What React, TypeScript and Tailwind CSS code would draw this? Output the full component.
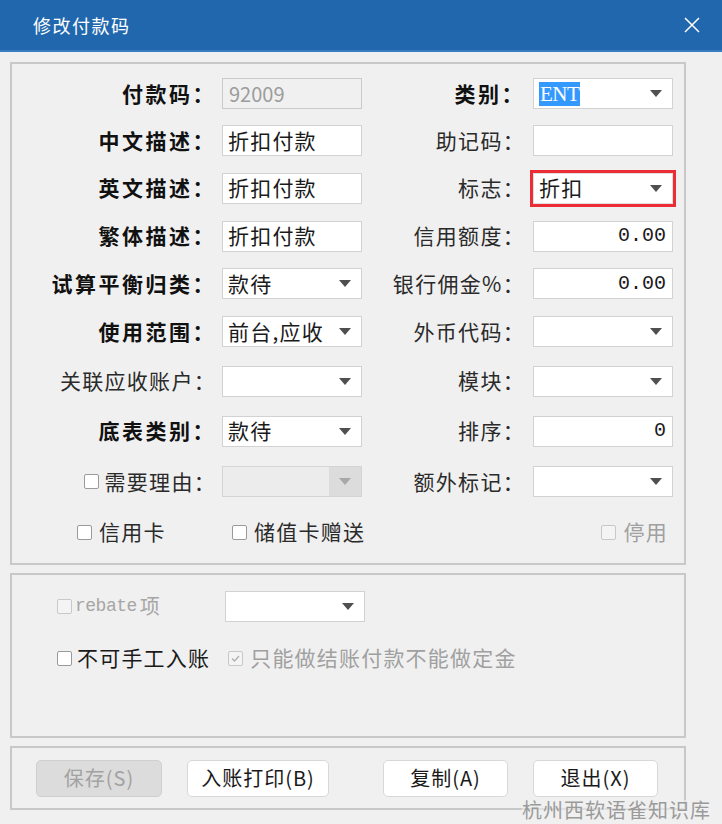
import React from "react";

const FONT = { fontFamily: '"Noto Sans CJK SC", "Noto Sans", sans-serif' };

function Arrow({ light }: { light?: boolean }) {
  return (
    <svg width="12" height="7" viewBox="0 0 12 7" className="shrink-0">
      <polygon points="0,0 12,0 6,7" fill={light ? "#a8a8a8" : "#4f4f4f"} />
    </svg>
  );
}

function Box({ children, w = "w-[140px]" }: { children?: React.ReactNode; w?: string }) {
  return (
    <div className={`${w} h-[31px] bg-white border border-[#d2d2d2] flex items-center px-[5px] text-[21px] tracking-[1.2px] text-[#1a1a1a] overflow-hidden whitespace-nowrap`}>
      {children}
    </div>
  );
}

function Select({ value, w = "w-[140px]" }: { value?: React.ReactNode; w?: string }) {
  return (
    <div className={`${w} h-[31px] bg-white border border-[#d2d2d2] flex items-center pl-[5px] pr-[10px] text-[21px] tracking-[1.2px] text-[#1a1a1a] whitespace-nowrap`}>
      <div className="flex-1 overflow-hidden">{value}</div>
      <Arrow />
    </div>
  );
}

function Num({ v }: { v: string }) {
  return (
    <div className="w-[140px] h-[31px] bg-white border border-[#d2d2d2] flex items-center justify-end pr-[6px] text-[20px] text-[#1a1a1a]" style={{ fontFamily: '"Liberation Mono", monospace' }}>
      {v}
    </div>
  );
}

function Check({ disabled, checked }: { disabled?: boolean; checked?: boolean }) {
  return (
    <span className={`inline-flex items-center justify-center w-[15px] h-[15px] rounded-[2px] border ${disabled ? "border-[#c8c8c8] bg-[#f4f4f4]" : "border-[#9a9a9a] bg-white"} shrink-0`}>
      {checked ? (
        <svg width="11" height="11" viewBox="0 0 11 11">
          <polyline points="2,5.5 4.5,8 9,3" fill="none" stroke="#b0b0b0" strokeWidth="1.3" />
        </svg>
      ) : null}
    </span>
  );
}

function Label({ children, bold, w }: { children: React.ReactNode; bold?: boolean; w: string }) {
  return (
    <div className={`${w} text-right text-[21px] whitespace-nowrap ${bold ? "font-bold tracking-[2.5px] text-[#111]" : "tracking-[1.3px] text-[#2a2a2a]"}`}>
      {children}
    </div>
  );
}

function Row({ h, l, lb, left, r, rb, right }: any) {
  return (
    <div className={`flex items-center ${h}`}>
      <Label w="w-[204px]" bold={lb}>{l}</Label>
      <div className="ml-[6px]">{left}</div>
      <Label w="w-[163px]" bold={rb}>{r}</Label>
      <div className="ml-[8px]">{right}</div>
    </div>
  );
}

export default function App() {
  return (
    <div className="relative w-[722px] h-[824px] bg-[#f0f0f0] overflow-hidden" style={FONT}>
      {/* 标题栏 */}
      <div className="h-[52px] bg-[#2167ad] border-b-2 border-[#3a7cc0] flex items-center justify-between pl-[33px] pr-[22px] text-white">
        <div className="text-[18px] tracking-[1.5px]">修改付款码</div>
        <svg width="16" height="16" viewBox="0 0 16 16">
          <path d="M1 1 L15 15 M15 1 L1 15" stroke="#fff" strokeWidth="1.5" />
        </svg>
      </div>

      {/* 主信息 */}
      <div className="ml-[10px] mt-[10px] w-[676px] h-[503px] border-2 border-[#c8c8c8] pt-[6px] flex flex-col">
        <Row
          h="h-[47px]"
          l="付款码："
          lb
          left={
            <div className="w-[140px] h-[31px] bg-[#f0f0f0] border border-[#cacaca] flex items-center px-[6px] text-[20px] text-[#9c9c9c]">92009</div>
          }
          r="类别："
          rb
          right={
            <Select
              value={
                <span className="bg-[#3399ff] text-white px-[1px] tracking-[-0.5px]" style={{ fontFamily: '"Liberation Serif", serif' }}>
                  ENT
                </span>
              }
            />
          }
        />
        <Row h="h-[47px]" l="中文描述：" lb left={<Box>折扣付款</Box>} r="助记码：" right={<Box />} />
        <Row
          h="h-[48px]"
          l="英文描述："
          lb
          left={<Box>折扣付款</Box>}
          r="标志："
          right={
            <div className="-m-[3px] border-[3px] border-[#ec2d35]">
              <div className="w-[140px] h-[31px] bg-white border border-[#e0e0e0] flex items-center pl-[5px] pr-[10px] text-[21px] tracking-[1.2px] text-[#1a1a1a]">
                <div className="flex-1">折扣</div>
                <Arrow />
              </div>
            </div>
          }
        />
        <Row h="h-[48px]" l="繁体描述：" lb left={<Box>折扣付款</Box>} r="信用额度：" right={<Num v="0.00" />} />
        <Row h="h-[47px]" l="试算平衡归类：" lb left={<Select value="款待" />} r="银行佣金%：" right={<Num v="0.00" />} />
        <Row h="h-[49px]" l="使用范围：" lb left={<Select value="前台,应收" />} r="外币代码：" right={<Select />} />
        <Row h="h-[50px]" l="关联应收账户：" left={<Select />} r="模块：" right={<Select />} />
        <Row h="h-[50px]" l="底表类别：" lb left={<Select value="款待" />} r="排序：" right={<Num v="0" />} />
        <Row
          h="h-[51px]"
          l={
            <span className="inline-flex items-center gap-[6px]">
              <Check />
              需要理由：
            </span>
          }
          left={
            <div className="w-[140px] h-[31px] bg-[#ececec] border border-[#d4d4d4] flex">
              <div className="flex-1" />
              <div className="w-[32px] bg-[#dcdcdc] flex items-center justify-center">
                <Arrow light />
              </div>
            </div>
          }
          r="额外标记："
          right={<Select />}
        />
        <div className="flex items-center h-[50px] text-[21px] tracking-[1.3px] text-[#2a2a2a]">
          <span className="ml-[65px] inline-flex items-center gap-[7px]">
            <Check />
            信用卡
          </span>
          <span className="ml-[66px] inline-flex items-center gap-[7px]">
            <Check />
            储值卡赠送
          </span>
          <span className="ml-auto mr-[16px] inline-flex items-center gap-[7px] text-[#a0a0a0]">
            <Check disabled />
            停用
          </span>
        </div>
      </div>

      {/* 其它选项 */}
      <div className="ml-[10px] mt-[8px] w-[676px] h-[165px] border-2 border-[#c8c8c8] pl-[45px] pt-[13px]">
        <div className="flex items-center h-[36px]">
          <span className="inline-flex items-center gap-[3px] w-[168px] text-[20px] text-[#a6a6a6]">
            <Check disabled />
            <span style={{ fontFamily: '"Liberation Mono", "Noto Sans CJK SC", monospace' }} className="text-[18px] tracking-[-0.5px]">rebate</span>
            <span>项</span>
          </span>
          <Select />
        </div>
        <div className="flex items-center h-[34px] mt-[17px] text-[21px] tracking-[1.2px]">
          <span className="inline-flex items-center gap-[5px] text-[#1a1a1a]">
            <Check />
            不可手工入账
          </span>
          <span className="ml-[18px] inline-flex items-center gap-[7px] text-[#a0a0a0]">
            <Check disabled checked />
            只能做结账付款不能做定金
          </span>
        </div>
      </div>

      {/* 按钮 */}
      <div className="ml-[10px] mt-[8px] w-[676px] h-[64px] border-2 border-[#c8c8c8] flex items-center pl-[24px] gap-[25px]">
        <button className="w-[126px] h-[37px] rounded-[5px] bg-[#dcdcdc] border border-[#cfcfcf] text-[20px] tracking-[1px] text-[#a2a2a2]">保存(S)</button>
        <button className="w-[142px] h-[37px] rounded-[5px] bg-white border border-[#d8d8d8] text-[20px] tracking-[1px] text-[#1a1a1a]">入账打印(B)</button>
        <button className="w-[125px] h-[37px] rounded-[5px] bg-white border border-[#d8d8d8] text-[20px] tracking-[1px] text-[#1a1a1a] ml-[29px]">复制(A)</button>
        <button className="w-[125px] h-[37px] rounded-[5px] bg-white border border-[#d8d8d8] text-[20px] tracking-[1px] text-[#1a1a1a]">退出(X)</button>
      </div>

      {/* 水印 */}
      <div className="absolute left-[522px] top-[800px] text-[20px] tracking-[1px] text-[#9a9a9a] bg-[#f0f0f0]/60 leading-none">
        杭州西软语雀知识库
      </div>
    </div>
  );
}
